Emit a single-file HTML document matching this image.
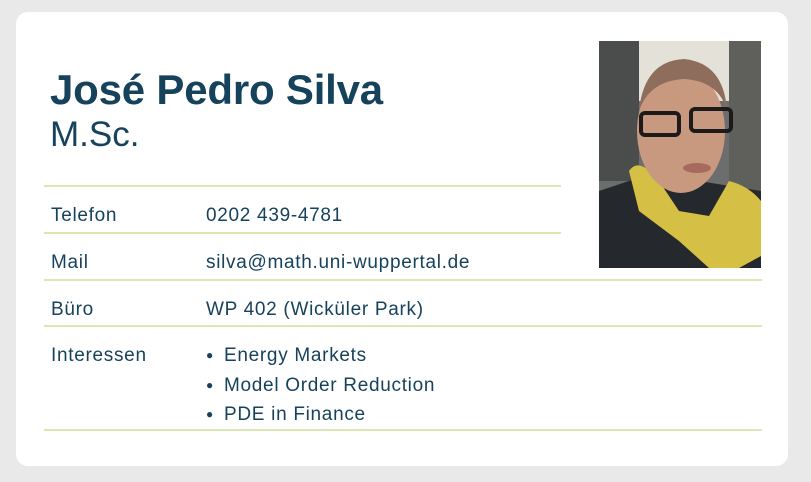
<!DOCTYPE html>
<html><head><meta charset="utf-8"><style>
body{margin:0;width:811px;height:482px;background:#e9e9e9;font-family:"Liberation Sans",sans-serif;color:#16425b;position:relative;overflow:hidden}
.card{position:absolute;left:16px;top:12px;width:772px;height:454px;background:#fff;border-radius:12px}
.a{position:absolute;white-space:nowrap}
.l{position:absolute;height:2px;background:#dbe7b3}
.t{font-size:19px;letter-spacing:0.7px}
.b{display:inline-block;width:18px;font-size:12px;vertical-align:2px}
</style></head><body>
<div class="card"></div>
<div class="a" style="left:50px;top:66px;font-size:42px;font-weight:bold;letter-spacing:-0.2px">José Pedro Silva</div>
<div class="a" style="left:50px;top:115px;font-size:35px">M.Sc.</div>
<div class="l" style="left:44px;top:185px;width:517px"></div>
<div class="l" style="left:44px;top:232px;width:517px"></div>
<div class="l" style="left:44px;top:279px;width:718px"></div>
<div class="l" style="left:44px;top:325px;width:718px"></div>
<div class="l" style="left:44px;top:429px;width:718px"></div>
<div class="a t" style="left:51px;top:205px">Telefon</div>
<div class="a t" style="left:206px;top:205px">0202 439-4781</div>
<div class="a t" style="left:51px;top:252px">Mail</div>
<div class="a t" style="left:206px;top:252px">silva@math.uni-wuppertal.de</div>
<div class="a t" style="left:51px;top:299px">Büro</div>
<div class="a t" style="left:206px;top:299px">WP 402 (Wicküler Park)</div>
<div class="a t" style="left:51px;top:345px">Interessen</div>
<div class="a t" style="left:206px;top:341px;line-height:28.5px"><span class="b">●</span>Energy Markets<br><span class="b">●</span>Model Order Reduction<br><span class="b">●</span>PDE in Finance</div>
<svg class="a" style="left:599px;top:41px" width="162" height="227" viewBox="0 0 162 227">
<rect width="162" height="227" fill="#6b6e6c"/>
<rect x="40" y="0" width="90" height="60" fill="#e4e2d8"/>
<rect x="0" y="0" width="40" height="140" fill="#4a4d4c"/>
<rect x="130" y="0" width="32" height="160" fill="#5f605c"/>
<path d="M0 150 L60 130 L100 140 L162 150 L162 227 L0 227Z" fill="#25292d"/>
<path d="M30 130 Q40 115 60 140 L80 170 L110 175 L130 140 Q150 145 162 160 L162 215 L140 227 L110 227 L80 200 L40 170Z" fill="#d6bf45"/>
<ellipse cx="82" cy="90" rx="44" ry="62" fill="#c9997f"/>
<path d="M40 70 Q45 20 85 18 Q125 22 128 70 Q120 40 85 38 Q50 40 40 70Z" fill="#8f6d5c"/>
<rect x="42" y="72" width="38" height="22" rx="4" fill="none" stroke="#1c1a1a" stroke-width="4"/>
<rect x="92" y="68" width="40" height="22" rx="4" fill="none" stroke="#1c1a1a" stroke-width="4"/>
<ellipse cx="98" cy="127" rx="14" ry="5" fill="#a66a5f"/>
</svg>
</body></html>
